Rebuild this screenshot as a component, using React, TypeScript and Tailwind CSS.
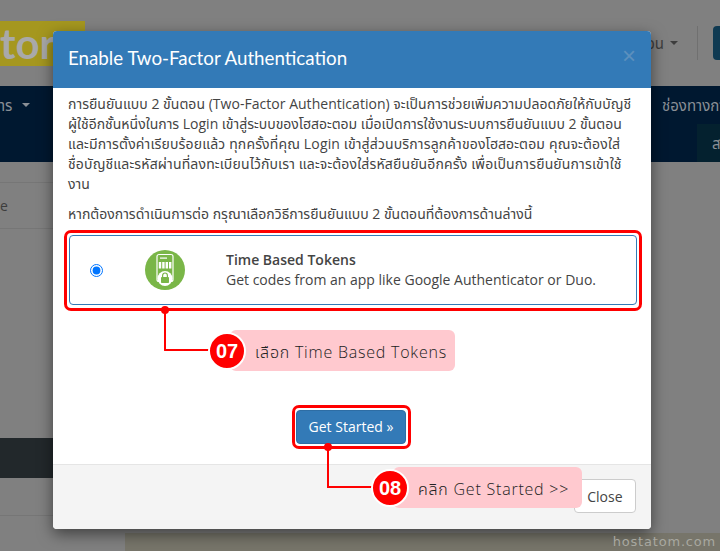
const thai = "font-['Open_Sans','Noto_Sans','Noto_Sans_Thai','DejaVu_Sans',sans-serif]";

function TokenIcon() {
  return (
    <svg width="40" height="40" viewBox="0 0 40 40">
      <circle cx="20" cy="20" r="20" fill="#7ab648" />
      <rect x="12" y="4.5" width="16" height="27" rx="2" fill="none" stroke="#fff" strokeWidth="1.2" />
      <rect x="15" y="7.5" width="7" height="1.2" fill="#fff" />
      <rect x="13.8" y="12" width="2.4" height="6.5" fill="#fff" />
      <rect x="17.2" y="12" width="2.4" height="6.5" fill="#fff" />
      <rect x="20.6" y="12" width="2.4" height="6.5" fill="#fff" />
      <rect x="24" y="12" width="2.4" height="6.5" fill="#fff" />
      <circle cx="20" cy="28.5" r="7.5" fill="#fff" />
      <rect x="16" y="27" width="8" height="6" rx="0.8" fill="#7ab648" />
      <path d="M17.6 27v-1.6a2.4 2.4 0 0 1 4.8 0V27" fill="none" stroke="#7ab648" strokeWidth="1.2" />
    </svg>
  );
}

function Caret({ className }: { className: string }) {
  return <span className={`inline-block h-0 w-0 border-x-[4px] border-t-[4px] border-x-transparent ${className}`} />;
}

// dimmed page that sits behind the modal
function BackPage() {
  return (
    <div className={`absolute inset-0 flex flex-col bg-[#808080] ${thai}`}>
      <div className="flex h-[86px] items-center justify-between">
        <div className="flex h-[45px] w-[85px] items-center overflow-hidden bg-[#a5971f] font-['Lato',sans-serif] text-[42px] font-bold text-[#a9a9a9]">
          tor
        </div>
        <div className="flex h-[34px] items-center text-[15px] text-[#3d3d3d]">
          <span>อน</span>
          <Caret className="ml-[6px] border-t-[#3d3d3d]" />
          <div className="ml-[19px] h-[34px] w-px bg-[#707070]" />
          <div className="ml-[15px] h-[34px] w-[7px] rounded-l bg-[#0f3a52]" />
        </div>
      </div>
      <div className="flex h-[76px] flex-col bg-[#001830]">
        <div className="flex h-[38px] items-center justify-between text-[15px] text-[#8a8f96]">
          <span className="ml-[-10px] flex items-center">
            การ
            <Caret className="ml-[10px] border-t-[#8a8f96]" />
          </span>
          <span className="w-[58px] overflow-hidden whitespace-nowrap">ช่องทางการ</span>
        </div>
        <div className="ml-auto flex h-[38px] w-[23px] items-center bg-[#04212f] pl-[15px] text-[15px] text-[#8a8f96]">ส</div>
      </div>
      <div className="h-[21px] w-[100px] border-b border-[#767676]" />
      <div className="flex h-[46px] w-[100px] items-center border-b border-[#767676] text-[14px] text-[#3d3d3d]">e</div>
      <div className="h-[209px]" />
      <div className="h-[40px] w-[100px] bg-[#22282b]" />
      <div className="h-[38px] w-[100px] border-b border-[#767676]" />
      <div className="h-[17px]" />
      <div className="ml-[125px] flex-1 bg-[#77756a]" />
    </div>
  );
}

function Step({ no, label, className }: { no: string; label: string; className: string }) {
  return (
    <div className={`absolute flex h-[41px] items-center rounded-md bg-[#ffc9cf] pt-[2px] ${className}`}>
      <div className="absolute top-[2px] left-[-22px] flex h-[38px] w-[38px] items-center justify-center rounded-full border-2 border-white bg-[#f00] font-['Liberation_Sans',sans-serif] text-[20px] font-bold text-white">
        {no}
      </div>
      <span className={`whitespace-nowrap text-[16px] font-light tracking-[0.78px] text-[#222] ${thai}`}>{label}</span>
    </div>
  );
}

export default function App() {
  return (
    <div className="relative h-[551px] w-[720px] overflow-hidden">
      <BackPage />

      <div className={`absolute top-[31px] left-[53px] flex h-[498px] w-[598px] flex-col overflow-hidden rounded-[4px] bg-white shadow-[0_5px_15px_rgba(0,0,0,0.5)] ${thai}`}>
        <div className="flex h-[57px] shrink-0 items-center justify-between bg-[#337ab7] px-[15px] pb-[2px]">
          <h4 className="font-['Lato',sans-serif] text-[18.75px] font-normal text-white">Enable Two-Factor Authentication</h4>
          <span className="mb-[6px] font-['Liberation_Sans',sans-serif] text-[24px] font-normal text-[#5c90bd]">×</span>
        </div>

        <div className="flex flex-1 flex-col px-[15px] pt-[6px] text-[14px] leading-[20px] text-[#444]">
          <p className="whitespace-nowrap">
            <span className="tracking-[0.03px]">การยืนยันแบบ 2 ขั้นตอน (Two-Factor Authentication) จะเป็นการช่วยเพิ่มความปลอดภัยให้กับบัญชี</span>
            <br />
            ผู้ใช้อีกชั้นหนึ่งในการ Login เข้าสู่ระบบของโฮสอะตอม เมื่อเปิดการใช้งานระบบการยืนยันแบบ 2 ขั้นตอน
            <br />
            <span className="tracking-[0.15px]">และมีการตั้งค่าเรียบร้อยแล้ว ทุกครั้งที่คุณ Login เข้าสู่ส่วนบริการลูกค้าของโฮสอะตอม คุณจะต้องใส่</span>
            <br />
            <span className="tracking-[0.15px]">ชื่อบัญชีและรหัสผ่านที่ลงทะเบียนไว้กับเรา และจะต้องใส่รหัสยืนยันอีกครั้ง เพื่อเป็นการยืนยันการเข้าใช้</span>
            <br />
            งาน
          </p>
          <p className="mt-[10px]">หากต้องการดำเนินการต่อ กรุณาเลือกวิธีการยืนยันแบบ 2 ขั้นตอนที่ต้องการด้านล่างนี้</p>

          <div className="mt-[11px] ml-[1px] flex h-[70px] w-[568px] items-center rounded-[4px] border border-[#337ab7]">
            <input type="radio" checked readOnly className="ml-[20px] h-[13px] w-[13px] accent-[#0075ff]" />
            <div className="ml-[42px]">
              <TokenIcon />
            </div>
            <div className="ml-[41px]">
              <div className="font-semibold">Time Based Tokens</div>
              <div>Get codes from an app like Google Authenticator or Duo.</div>
            </div>
          </div>

          <div className="mt-[105px] flex justify-center pr-[2px]">
            <button type="button" className="h-[34px] rounded-[4px] border border-[#2e6da4] bg-[#337ab7] px-3 text-[14px] text-white">
              Get Started »
            </button>
          </div>
        </div>

        <div className="flex h-[65px] shrink-0 items-center justify-end border-t border-[#e5e5e5] bg-[#f4f4f4] pr-[15px] pb-[2px]">
          <button type="button" className="h-[34px] rounded-[4px] border border-[#ccc] bg-white px-[12.5px] text-[14px] text-[#444]">
            Close
          </button>
        </div>
      </div>

      {/* red callouts on top of the modal */}
      <div className="absolute top-[230px] left-[64px] h-[81px] w-[578px] rounded-[7px] border-[3px] border-[#f00]" />
      <div className="absolute top-[306px] left-[161px] h-2 w-2 rounded-full bg-[#f00]" />
      <div className="absolute top-[310px] left-[164px] h-[41px] w-[50px] rounded-bl-[1px] border-b-2 border-l-2 border-[#f00]" />
      <Step no="07" label="เลือก Time Based Tokens" className="top-[330px] left-[230px] w-[225px] pl-[25px]" />

      <div className="absolute top-[405px] left-[292px] h-[44px] w-[119px] rounded-[7px] border-[3px] border-[#f00]" />
      <div className="absolute top-[443px] left-[324px] h-2 w-2 rounded-full bg-[#f00]" />
      <div className="absolute top-[447px] left-[327px] h-[41px] w-[50px] border-b-2 border-l-2 border-[#f00]" />
      <Step no="08" label="คลิก Get Started >>" className="top-[467px] left-[393px] w-[189px] pl-[25px]" />

      <span className="absolute right-[4px] bottom-[0px] font-['DejaVu_Sans',sans-serif] text-[13px] tracking-[0.8px] text-[#a8a8a0]">
        hostatom.com
      </span>
    </div>
  );
}
